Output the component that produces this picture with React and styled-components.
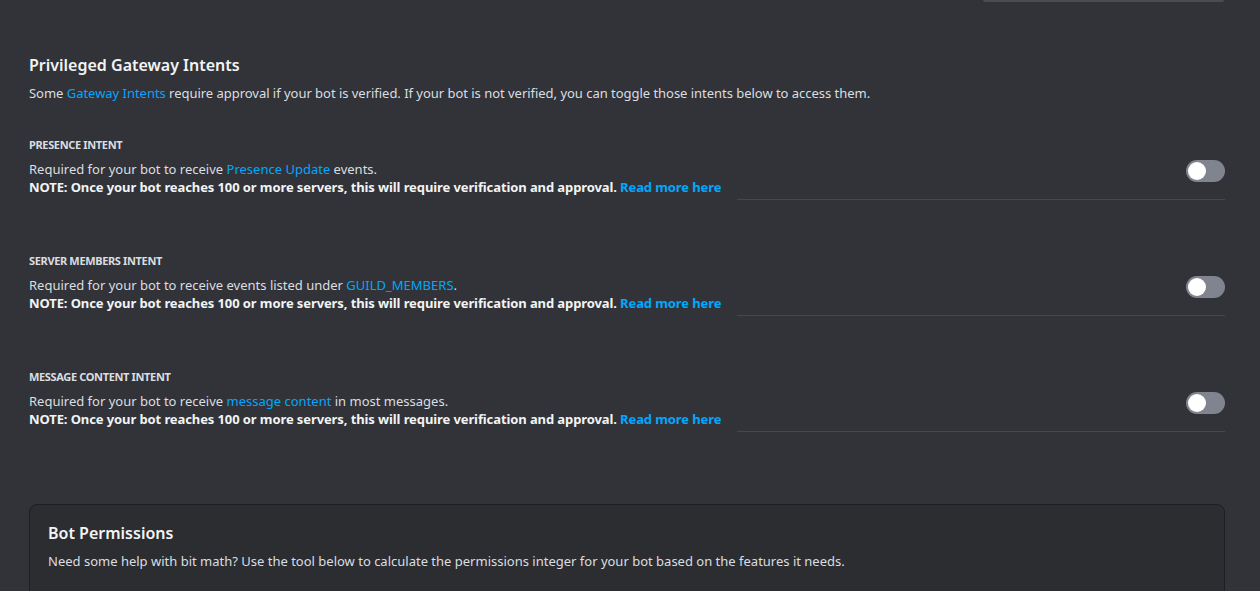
import React from 'react'
import styled, { createGlobalStyle } from 'styled-components'

const GlobalStyle = createGlobalStyle`
  html, body {
    margin: 0;
    padding: 0;
    background: #313338;
  }
  body {
    font-family: "Noto Sans", "Open Sans", sans-serif;
    color: #dbdee1;
  }
`

const Page = styled.div`
  width: 1260px;
  height: 591px;
  overflow: hidden;
  background: #313338;
`

const TopInputEdge = styled.div`
  height: 2px;
  margin-left: 983px;
  width: 241px;
  background: #4a4c52;
  border-radius: 0 0 2px 2px;
`

const Content = styled.div`
  padding: 52px 35px 0 29px;
`

const SectionTitle = styled.h2`
  margin: 0;
  font-size: 16px;
  line-height: 22px;
  font-weight: 600;
  color: #f2f3f5;
`

const Description = styled.p`
  margin: 8px 0 0;
  font-size: 13px;
  line-height: 18px;
  letter-spacing: -0.03px;
  color: #dbdee1;
`

const Link = styled.a`
  color: #00a8fc;
  text-decoration: none;
  font-weight: ${({ $bold }) => ($bold ? 700 : 'inherit')};
`

const IntentList = styled.div`
  margin-top: 35px;
  display: flex;
  flex-direction: column;
  gap: 53px;
`

const Intent = styled.div`
  display: flex;
  flex-direction: column;
`

const IntentLabel = styled.div`
  font-size: 11px;
  line-height: 16px;
  font-weight: 700;
  text-transform: uppercase;
  letter-spacing: -0.35px;
  color: #dbdee1;
`

const IntentRow = styled.div`
  display: flex;
  align-items: flex-start;
  justify-content: space-between;
  margin-top: 7px;
`

const IntentText = styled.div`
  font-size: 13px;
  line-height: 18px;
  color: #dbdee1;
`

const Note = styled.div`
  font-weight: 700;
  letter-spacing: -0.1px;
  color: #f2f3f5;
`

const Switch = styled.div`
  width: 39px;
  height: 22px;
  border-radius: 11px;
  background: #80848e;
  position: relative;
  flex-shrink: 0;

  &::after {
    content: '';
    position: absolute;
    left: 2px;
    top: 2px;
    width: 18px;
    height: 18px;
    border-radius: 50%;
    background: #ffffff;
  }
`

const Divider = styled.div`
  align-self: flex-end;
  width: 488px;
  height: 1px;
  margin-top: 3px;
  background: #45474d;
`

const Card = styled.section`
  margin-top: 72px;
  background: #2b2d31;
  border: 1px solid #1e1f22;
  border-radius: 8px;
  padding: 18px 18px 40px;
`

const CardTitle = styled.h3`
  margin: 0;
  font-size: 16px;
  line-height: 20px;
  font-weight: 600;
  color: #f2f3f5;
`

const CardText = styled.p`
  margin: 9px 0 0;
  font-size: 13px;
  line-height: 18px;
  color: #dbdee1;
`

const intents = [
  {
    label: 'Presence Intent',
    before: 'Required for your bot to receive ',
    link: 'Presence Update',
    after: ' events.',
  },
  {
    label: 'Server Members Intent',
    before: 'Required for your bot to receive events listed under ',
    link: 'GUILD_MEMBERS',
    after: '.',
  },
  {
    label: 'Message Content Intent',
    before: 'Required for your bot to receive ',
    link: 'message content',
    after: ' in most messages.',
  },
]

export default function App() {
  return (
    <Page>
      <GlobalStyle />
      <TopInputEdge />
      <Content>
        <SectionTitle>Privileged Gateway Intents</SectionTitle>
        <Description>
          Some <Link href="#">Gateway Intents</Link> require approval if your bot is verified. If your bot is not
          verified, you can toggle those intents below to access them.
        </Description>

        <IntentList>
          {intents.map((intent) => (
            <Intent key={intent.label}>
              <IntentLabel>{intent.label}</IntentLabel>
              <IntentRow>
                <IntentText>
                  {intent.before}
                  <Link href="#">{intent.link}</Link>
                  {intent.after}
                  <Note>
                    NOTE: Once your bot reaches 100 or more servers, this will require verification and approval.{' '}
                    <Link href="#" $bold>Read more here</Link>
                  </Note>
                </IntentText>
                <Switch />
              </IntentRow>
              <Divider />
            </Intent>
          ))}
        </IntentList>

        <Card>
          <CardTitle>Bot Permissions</CardTitle>
          <CardText>
            Need some help with bit math? Use the tool below to calculate the permissions integer for your bot based on
            the features it needs.
          </CardText>
        </Card>
      </Content>
    </Page>
  )
}
